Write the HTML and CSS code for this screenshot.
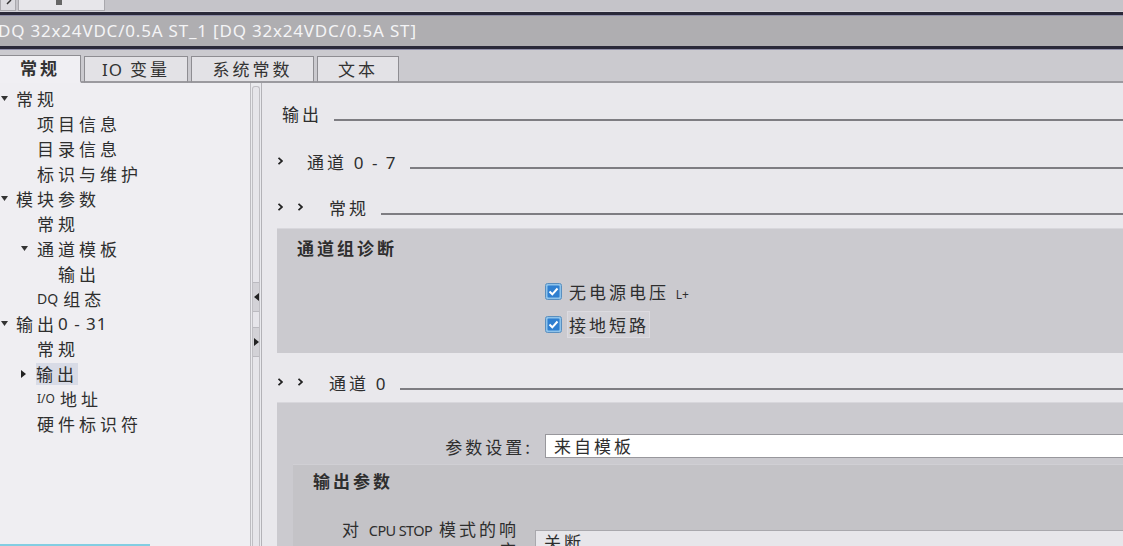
FILE: index.html
```html
<!DOCTYPE html>
<html lang="zh">
<head>
<meta charset="utf-8">
<title>DQ 32x24VDC/0.5A ST_1</title>
<link rel="stylesheet" href="styles.css">
</head>
<body>
<div class="app">
  <div class="topbar">
    <div class="ttab ttab-a"><svg width="8" height="8" viewBox="0 0 8 8"><path d="M6 0 L2 4" stroke="#333" stroke-width="1.5" fill="none"/></svg></div>
    <div class="ttab ttab-b"><span class="sq"></span></div>
  </div>
  <div class="darkline"></div>
  <div class="titlebar">DQ 32x24VDC/0.5A ST_1 [DQ 32x24VDC/0.5A ST]</div>
  <div class="darkline"></div>
  <div class="tabbar">
    <div class="tab tab-1 active">常规</div>
    <div class="tab tab-2"><span class="lat">IO</span> 变量</div>
    <div class="tab tab-3">系统常数</div>
    <div class="tab tab-4">文本</div>
  </div>
  <div class="main">
    <div class="tree">
      <div class="node l0"><span class="tw"><svg width="7" height="6" viewBox="0 0 7 6"><path d="M0 0H7L3.5 5Z" fill="#333"/></svg></span>常规</div>
      <div class="node l1">项目信息</div>
      <div class="node l1">目录信息</div>
      <div class="node l1">标识与维护</div>
      <div class="node l0"><span class="tw"><svg width="7" height="6" viewBox="0 0 7 6"><path d="M0 0H7L3.5 5Z" fill="#333"/></svg></span>模块参数</div>
      <div class="node l1">常规</div>
      <div class="node l1t"><span class="tw"><svg width="7" height="6" viewBox="0 0 7 6"><path d="M0 0H7L3.5 5Z" fill="#333"/></svg></span>通道模板</div>
      <div class="node l2">输出</div>
      <div class="node l1"><span class="lat sm">DQ</span><span class="gap"></span>组态</div>
      <div class="node l0"><span class="tw"><svg width="7" height="6" viewBox="0 0 7 6"><path d="M0 0H7L3.5 5Z" fill="#333"/></svg></span>输出<span class="lat">0 - 31</span></div>
      <div class="node l1">常规</div>
      <div class="node l1t"><span class="tw"><svg width="6" height="8" viewBox="0 0 6 8"><path d="M0 0V8L5 4Z" fill="#222"/></svg></span><span class="sel">输出</span></div>
      <div class="node l1"><span class="lat xs">I/O</span><span class="gap"></span>地址</div>
      <div class="node l1">硬件标识符</div>
      <div class="cyanline"></div>
    </div>
    <div class="splitter">
      <div class="split-track">
        <div class="split-btn"><svg width="5" height="8" viewBox="0 0 5 8"><path d="M5 0V8L0 4Z" fill="#222"/></svg></div>
        <div class="split-btn"><svg width="5" height="8" viewBox="0 0 5 8"><path d="M0 0V8L5 4Z" fill="#222"/></svg></div>
      </div>
    </div>
    <div class="content">
      <div class="head h-out"><span class="htext">输出</span><span class="hline"></span></div>
      <div class="head h-ch07"><span class="chev"><svg width="5" height="8" viewBox="0 0 5 8"><path d="M0.5 0.8L4 4L0.5 7.2" stroke="#222" stroke-width="1.8" fill="none"/></svg></span><span class="htext t1">通道 <span class="lat">0 - 7</span></span><span class="hline"></span></div>
      <div class="head h-gen"><span class="chev"><svg width="5" height="8" viewBox="0 0 5 8"><path d="M0.5 0.8L4 4L0.5 7.2" stroke="#222" stroke-width="1.8" fill="none"/></svg></span><span class="chev c2"><svg width="5" height="8" viewBox="0 0 5 8"><path d="M0.5 0.8L4 4L0.5 7.2" stroke="#222" stroke-width="1.8" fill="none"/></svg></span><span class="htext t2">常规</span><span class="hline"></span></div>
      <div class="box box-diag">
        <div class="boxtitle">通道组诊断</div>
        <div class="checks">
          <div class="chk"><span class="cb"><svg width="17" height="17" viewBox="0 0 17 17"><rect x="0.5" y="0.5" width="16" height="16" rx="2" fill="#8fc3ea" stroke="#5a8fbf"/><rect x="2.5" y="2.5" width="12" height="12" rx="1" fill="#2f7fd0"/><path d="M4.5 8.5L7.3 11.3L12.5 5.5" stroke="#fff" stroke-width="2" fill="none"/></svg></span><span class="clabel">无电源电压 <span class="lat xs">L+</span></span></div>
          <div class="chk"><span class="cb"><svg width="17" height="17" viewBox="0 0 17 17"><rect x="0.5" y="0.5" width="16" height="16" rx="2" fill="#8fc3ea" stroke="#5a8fbf"/><rect x="2.5" y="2.5" width="12" height="12" rx="1" fill="#2f7fd0"/><path d="M4.5 8.5L7.3 11.3L12.5 5.5" stroke="#fff" stroke-width="2" fill="none"/></svg></span><span class="clabel focus">接地短路</span></div>
        </div>
      </div>
      <div class="head h-ch0"><span class="chev"><svg width="5" height="8" viewBox="0 0 5 8"><path d="M0.5 0.8L4 4L0.5 7.2" stroke="#222" stroke-width="1.8" fill="none"/></svg></span><span class="chev c2"><svg width="5" height="8" viewBox="0 0 5 8"><path d="M0.5 0.8L4 4L0.5 7.2" stroke="#222" stroke-width="1.8" fill="none"/></svg></span><span class="htext t2">通道 <span class="lat">0</span></span><span class="hline"></span></div>
      <div class="box box-ch0">
        <div class="prow">
          <span class="plabel">参数设置:</span>
          <span class="field">来自模板</span>
        </div>
        <div class="inner">
          <div class="boxtitle ititle">输出参数</div>
          <div class="irow">
            <span class="ilabel">对 <span class="lat cond">CPU STOP</span> 模式的响<br>应</span>
            <span class="field dd">关断</span>
          </div>
        </div>
      </div>
    </div>
  </div>
</div>
</body>
</html>
```
FILE: styles.css
```css
* { box-sizing: border-box; }
html, body { margin: 0; padding: 0; }
body {
  width: 1123px;
  height: 546px;
  overflow: hidden;
  background: #e9e8ec;
  font-family: "Noto Sans CJK SC", "Noto Sans", sans-serif;
  color: #2e2e2e;
}
.app { display: flex; flex-direction: column; height: 546px; }

.topbar {
  height: 12px;
  background: #c5c4c9;
  border-bottom: 1px solid #d3d2d8;
  display: flex;
  gap: 2px;
}
.ttab { height: 11px; background: #dcdbe0; border: 1px solid #a9a8ad; border-top: none; }
.ttab-a { width: 16px; display: flex; justify-content: flex-end; padding-right: 2px; }
.ttab-b { width: 87px; background: #e7e6ea; display: flex; justify-content: center; }
.sq { width: 6px; height: 5px; background: #666; margin-left: -6px; }

.darkline {
  height: 4px;
  background: #2a2939;
  border-bottom: 1px solid #8f8ea8;
}
.titlebar {
  height: 30px;
  background: #afaeb1;
  color: #f4f4f6;
  font-family: "Noto Sans", "DejaVu Sans", sans-serif;
  font-size: 17px;
  letter-spacing: 0.8px;
  line-height: 30px;
  margin-left: -2px;
  white-space: nowrap;
}

.tabbar {
  height: 33px;
  background: #cbcacf;
  border-bottom: 2px solid #9b9a9f;
  display: flex;
  align-items: flex-end;
  gap: 3px;
  margin-left: -1px;
}
.tab {
  height: 27px;
  margin-bottom: -2px;
  background: #e3e2e6;
  border: 1px solid #8e8d92;
  border-bottom: 2px solid #9b9a9f;
  font-size: 17px;
  letter-spacing: 3px;
  line-height: 24px;
  text-align: center;
  color: #333;
}
.tab-1 { width: 82px; }
.tab-2 { width: 104px; }
.tab-3 { width: 123px; }
.tab-4 { width: 82px; }
.tab.active {
  background: #f0eff3;
  font-weight: bold;
  border-bottom-color: #f0eff3;
  height: 28px;
}
.lat { font-family: "Noto Sans", "DejaVu Sans", sans-serif; letter-spacing: 1px; }
.sm { font-size: 14px; letter-spacing: 0; }
.xs { font-size: 12px; letter-spacing: -0.5px; }
.cond { font-size: 14.5px; letter-spacing: -0.6px; }
.gap { display: inline-block; width: 5px; }

.main { flex: 1; display: flex; min-height: 0; }

.tree {
  width: 250px;
  flex: none;
  background: #efeef2;
  padding-top: 3px;
  position: relative;
}
.node {
  height: 25px;
  line-height: 25px;
  font-size: 17px;
  letter-spacing: 4px;
  white-space: nowrap;
  display: flex;
  align-items: center;
}
.node .lat { letter-spacing: 1px; }
.node .sm, .node .xs { letter-spacing: 0; }
.l0 { padding-left: 0; }
.l1 { padding-left: 37px; }
.l1t { padding-left: 19px; }
.l2 { padding-left: 58px; }
.tw { width: 18px; flex: none; display: flex; align-items: center; padding-left: 2px; }
.l0 .tw { width: 16px; padding-left: 1px; }
.sel {
  background: #d8dbe6;
  height: 22px;
  line-height: 22px;
  margin-left: -1px;
}
.cyanline {
  position: absolute;
  left: 0;
  bottom: 0;
  width: 150px;
  height: 2px;
  background: #82cde2;
}

.splitter {
  width: 12px;
  flex: none;
  background: #eaeaee;
  border-left: 1px solid #bdbcc1;
  border-right: 1px solid #b3b2b7;
  padding: 3px 0 0 1px;
}
.split-track {
  height: 100%;
  width: 8px;
  border: 1px solid #c0bfc4;
  border-radius: 3px 3px 0 0;
  border-bottom: none;
  background: #e6e5ea;
  padding-top: 195px;
  display: flex;
  flex-direction: column;
  gap: 15px;
}
.split-btn {
  height: 30px;
  background: #d3d2d7;
  border-top: 1px solid #bbbac0;
  border-bottom: 1px solid #bbbac0;
  display: flex;
  align-items: center;
  justify-content: center;
}

.content {
  flex: 1;
  padding-left: 15px;
  padding-top: 15px;
  overflow: hidden;
  background: #e9e8ec;
}
.head {
  height: 30px;
  display: flex;
  align-items: center;
  font-size: 17px;
  letter-spacing: 3px;
  white-space: nowrap;
}
.h-ch07 { margin-top: 18px; }
.h-gen { margin-top: 16px; }
.h-ch0 { margin-top: 14px; }
.h-out .htext { padding-left: 5px; }
.chev { width: 6px; display: flex; margin-left: 1px; }
.c2 { margin-left: 14px; }
.t1 { margin-left: 23px; }
.t2 { margin-left: 25px; }
.htext .lat { letter-spacing: 2px; }
.hline {
  flex: 1;
  height: 2px;
  background: #7e7d82;
  margin-left: 12px;
  margin-top: 13px;
}

.box {
  background: #cbcacf;
  border-top: 1px solid #d8d7dc;
}
.box-diag {
  margin-top: 6px;
  height: 125px;
  padding: 6px 0 0 20px;
}
.boxtitle {
  font-size: 17px;
  font-weight: bold;
  letter-spacing: 3px;
  height: 26px;
  line-height: 26px;
}
.checks {
  margin-left: 248px;
  margin-top: 19px;
  display: flex;
  flex-direction: column;
  gap: 10px;
}
.chk {
  display: flex;
  align-items: center;
  height: 23px;
  font-size: 17px;
  letter-spacing: 3px;
}
.cb { width: 17px; height: 17px; display: flex; margin-right: 7px; }
.clabel .lat { letter-spacing: 0; }
.focus {
  background: #d3d2d7;
  border: 1px solid #dcdbe0;
  margin-left: -2px;
  padding-left: 1px;
}

.box-ch0 {
  margin-top: 5px;
  height: 200px;
  padding-top: 31px;
}
.prow { display: flex; align-items: center; height: 24px; }
.plabel {
  width: 268px;
  text-align: right;
  padding-right: 12px;
  font-size: 17px;
  letter-spacing: 3px;
}
.field {
  flex: 1;
  height: 24px;
  background: #ffffff;
  border: 1px solid #98979c;
  border-right: none;
  font-size: 17px;
  letter-spacing: 3px;
  line-height: 22px;
  padding-left: 8px;
}
.inner {
  margin: 6px 0 0 16px;
  background: #c4c3c7;
  border-top: 1px solid #d0cfd4;
  height: 200px;
  padding: 3px 0 0 20px;
}
.ititle { height: 26px; }
.irow { display: flex; align-items: flex-start; margin-top: 25px; }
.ilabel {
  width: 222px;
  flex: none;
  text-align: right;
  font-size: 17px;
  letter-spacing: 3px;
  line-height: 20px;
  padding-right: 16px;
}
.dd {
  margin-top: 11px;
  background: #e7e6ea;
  border-color: #a9a8ad;
}
```
